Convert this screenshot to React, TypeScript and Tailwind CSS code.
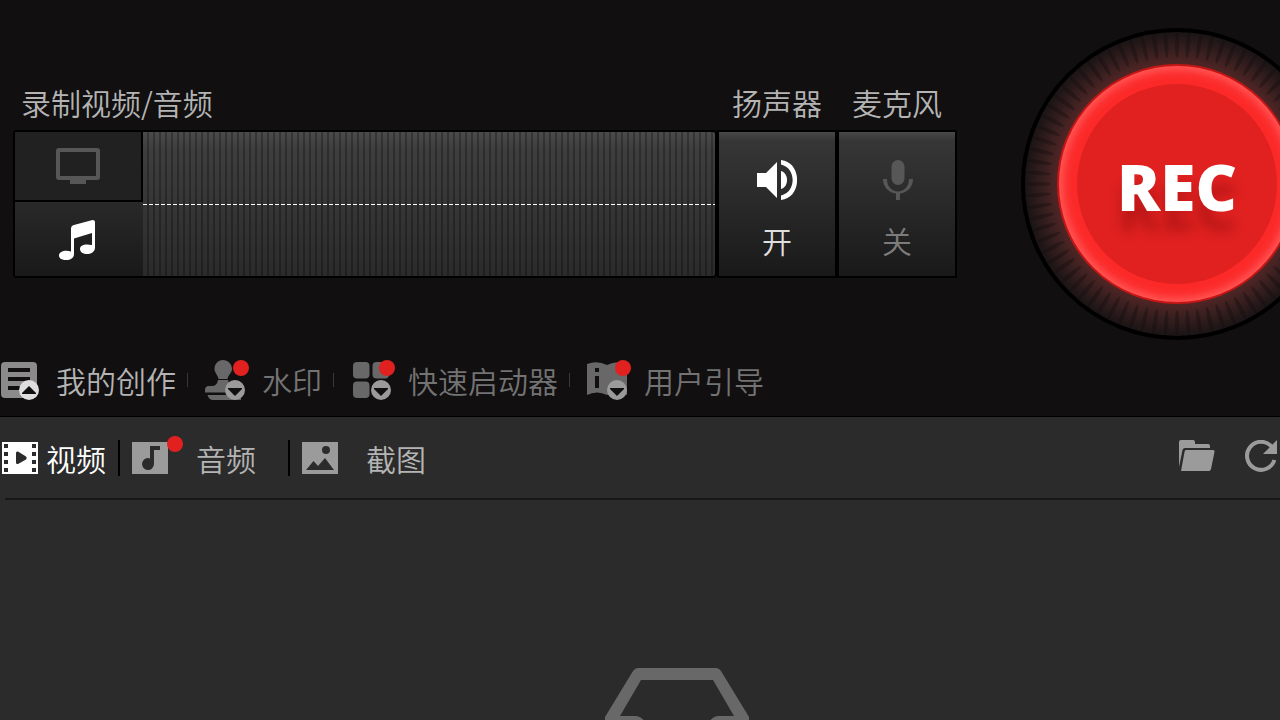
import type { ReactNode } from "react";

const ticks = Array.from({ length: 80 }, (_, i) => i * 4.5);

function MonitorIcon() {
  return (
    <svg className="h-10 w-11" viewBox="0 0 44 40" fill="#575757" aria-hidden="true">
      <path fillRule="evenodd" d="M3 2h38q3 0 3 3v26q0 3-3 3h-11v4H14v-4H3q-3 0-3-3V5q0-3 3-3zM4 6v24h36V6z" />
    </svg>
  );
}

function MusicIcon() {
  return (
    <svg className="h-10 w-9" viewBox="0 0 36 40" fill="#fff" aria-hidden="true">
      <path d="M12 8.500Q12 6 14 5.300L33.500 0.100Q36 0 36 2V27.500C36 31.500 32.500 34 28.500 34C24 34 21 32 21 29C21 25 26 23.500 33 25V13L15 18.500V34C15 38 11.500 40 7 40C3 40 0 38.500 0 35.500C0 31.500 6 29.800 12 31.500z" />
    </svg>
  );
}

function SpeakerIcon() {
  return (
    <svg className="size-10" viewBox="0 0 40 40" fill="#fff" aria-hidden="true">
      <path d="M0 13h9L20 2v36L9 27H0z" />
      <path d="M24 11c8 2 8 16 0 18z" />
      <path d="M24 0C45.500 2 45.500 38 24 40v-4.500C39.500 32 39.500 8 24 4.500z" />
    </svg>
  );
}

function MicIcon() {
  return (
    <svg className="size-10" viewBox="0 0 40 40" fill="#575757" aria-hidden="true">
      <rect x="14.500" y="0" width="13" height="25" rx="6.500" />
      <path d="M6 19h4c0 16.500 22 16.500 22 0h4c0 8-5.500 13.500-13 14.500V40h-4v-6.500C11.500 32.500 6 27 6 19z" />
    </svg>
  );
}

function Badge({ up }: { up?: boolean }) {
  return up ? (
    <g>
      <circle cx="30" cy="30" r="10" fill="#dedede" />
      <path d="M30 26l7 7v1H23v-1z" fill="#110f10" />
    </g>
  ) : (
    <g>
      <circle cx="30" cy="30" r="10" fill="#9b9b9b" />
      <path d="M23 28h14v1l-7 7-7-7z" fill="#110f10" />
    </g>
  );
}

function ListIcon() {
  return (
    <svg className="size-10" viewBox="0 0 40 40" aria-hidden="true">
      <rect x="2" y="2" width="36" height="36" rx="4" fill="#8b8b8b" />
      <path d="M9 8h22v4H9zM9 17h22v4H9zM9 26h22v4H9z" fill="#110f10" />
      <Badge up />
    </svg>
  );
}

function StampIcon() {
  return (
    <svg className="size-10" viewBox="0 0 40 40" aria-hidden="true">
      <path d="M18 0c5 0 9 4 9 9 0 4-3.500 5-4.500 10h-9C12.500 14 9.500 13 9.500 9c0-5 3.500-9 8.500-9zM13 20h10q1 6 8 6h5v6.500H0V30q0-4 4-4h3q5 0 6-6zM2.500 35H36v5H8q-4 0-5.500-5z" fill="#686868" />
      <Badge />
    </svg>
  );
}

function GridIcon() {
  return (
    <svg className="size-10" viewBox="0 0 40 40" aria-hidden="true">
      <g fill="#686868">
        <rect x="2" y="2" width="16.500" height="16.500" rx="4" />
        <rect x="21.500" y="2" width="16.500" height="16.500" rx="4" />
        <rect x="2" y="21.500" width="16.500" height="16.500" rx="4" />
      </g>
      <Badge />
    </svg>
  );
}

function GuideIcon() {
  return (
    <svg className="size-10" viewBox="0 0 40 40" aria-hidden="true">
      <path d="M0 4q10-4 20 1 10-5 20-1v31q-10-4-20 0-10-5-20 0z" fill="#686868" />
      <path d="M8 8h4v4H8zM8 16h4v12H8z" fill="#110f10" />
      <Badge />
    </svg>
  );
}

function FilmIcon() {
  return (
    <svg className="h-8 w-9" viewBox="0 0 36 32" aria-hidden="true">
      <path d="M0 0h36v32H0z" fill="#fff" />
      <path d="M2 2h4v4H2zM2 10h4v4H2zM2 18h4v4H2zM2 26h4v4H2zM30 2h4v4h-4zM30 10h4v4h-4zM30 18h4v4h-4zM30 26h4v4h-4zM14 11q0-2 2-1.500l8 5q1.500 1.500 0 3l-8 4.500q-2 .5-2-1.500z" fill="#2b2b2b" />
    </svg>
  );
}

function AudioIcon() {
  return (
    <svg className="h-8 w-9" viewBox="0 0 36 32" aria-hidden="true">
      <path d="M0 0h36v32H0z" fill="#9b9b9b" />
      <path d="M18 4h10v4h-6v14a6 6 0 1 1-4-5.600z" fill="#2b2b2b" />
    </svg>
  );
}

function PictureIcon() {
  return (
    <svg className="h-8 w-9" viewBox="0 0 36 32" aria-hidden="true">
      <path d="M0 0h36v32H0z" fill="#9b9b9b" />
      <circle cx="24" cy="8" r="4" fill="#2b2b2b" />
      <path d="M4 28l7.500-9 4.500 5 7-8 9 12z" fill="#2b2b2b" />
    </svg>
  );
}

function FolderIcon() {
  return (
    <svg className="h-8 w-9" viewBox="0 0 36 32" fill="#9b9b9b" aria-hidden="true">
      <path d="M0 2q0-2 2-2h12q2 0 2 2v2h13q2 0 2 2v2H6q-2 0-2.500 2L0 27z" />
      <path d="M7 10h27q2 0 1.500 2L32 29q-.5 2-2 2H2l3.500-19q.3-2 1.500-2z" />
    </svg>
  );
}

function RefreshIcon() {
  return (
    <svg className="size-8" viewBox="0 0 32 32" aria-hidden="true">
      <path d="M26.500 6.500A14 14 0 1 0 29.400 20" fill="none" stroke="#9b9b9b" strokeWidth="4" />
      <path d="M32 0v14H18z" fill="#9b9b9b" />
    </svg>
  );
}

function Dot({ place }: { place: string }) {
  return <span className={`absolute size-4 rounded-full bg-[#e02120] ${place}`} />;
}

function Divider() {
  return <span className="mr-[17px] ml-[11px] h-3.5 w-px bg-[#393939]" />;
}

function Tab({ icon, label, dot, active }: { icon: ReactNode; label: string; dot?: string; active?: boolean }) {
  return (
    <button
      type="button"
      className={`flex items-center gap-[17px] whitespace-nowrap ${active ? "text-[#b4b4b4]" : "text-[#737373]"}`}
    >
      <span className="relative">
        {icon}
        {dot && <Dot place={dot} />}
      </span>
      <span className="leading-10">{label}</span>
    </button>
  );
}

function Device({ title, state, on, icon }: { title: string; state: string; on?: boolean; icon: ReactNode }) {
  return (
    <section className="w-[120px] shrink-0">
      <h2 className="mb-2 text-center leading-10 whitespace-nowrap text-[#b4b4b4]">{title}</h2>
      <button
        type="button"
        aria-label={title + state}
        className={`flex h-[148px] w-full flex-col items-center gap-5 border-2 border-black bg-[linear-gradient(#484848_0,#363636_9px,#343434_20px,#191919_100%)] pt-7 ${on ? "text-[#dedede]" : "text-[#7c7c7c]"}`}
      >
        {icon}
        <span className="leading-10">{state}</span>
      </button>
    </section>
  );
}

function RecordDial() {
  return (
    <button type="button" aria-label="REC" className="relative -mr-[53px] size-[312px] shrink-0">
      <svg className="size-full" viewBox="-156 -156 312 312" aria-hidden="true">
        <defs>
          <radialGradient id="halo" gradientUnits="userSpaceOnUse" cx="0" cy="0" r="154">
            <stop offset="0.76" stopColor="#552626" />
            <stop offset="0.86" stopColor="#3b2020" />
            <stop offset="1" stopColor="#171314" />
          </radialGradient>
          <radialGradient id="rim" gradientUnits="userSpaceOnUse" cx="0" cy="0" r="118">
            <stop offset="0.88" stopColor="#fb2928" />
            <stop offset="0.93" stopColor="#fc3030" />
            <stop offset="1" stopColor="#ff5251" />
          </radialGradient>
        </defs>
        <circle r="154" fill="url(#halo)" stroke="#000" strokeWidth="4" />
        {ticks.map((a) => (
          <ellipse key={a} cx="0" cy="-139" rx="2" ry="12.500" fill="#120c0d" opacity="0.35" transform={`rotate(${a})`} />
        ))}
        <circle r="119" fill="url(#rim)" stroke="#c51615" strokeWidth="2" />
        <circle r="100" fill="#e02120" />
      </svg>
      <span className="absolute inset-0 flex items-center justify-center pt-1.5 font-['Open_Sans',sans-serif] text-[64px] leading-none font-extrabold text-white [text-shadow:0_20px_12px_rgba(100,0,0,0.3)]">
        REC
      </span>
    </button>
  );
}

export default function App() {
  return (
    <div className="flex h-screen flex-col overflow-hidden bg-[#2b2b2b] font-['Noto_Sans_CJK_SC',sans-serif] text-[30px] font-[350]">
      <header className="border-b border-black bg-[#110f10]">
        <div className="flex pt-7 pl-[13px]">
          <div className="mr-16 flex min-w-0 flex-1 pt-[54px]">
            <section className="min-w-0 flex-1">
              <h2 className="mb-2 pl-2 leading-10 whitespace-nowrap text-[#b4b4b4]">录制视频/音频</h2>
              <div className="flex h-[148px] rounded-sm border-2 border-black bg-black">
                <div className="flex w-32 shrink-0 flex-col">
                  <button type="button" aria-label="视频" className="flex h-[70px] items-center justify-center border-r-2 border-b-2 border-black bg-[#212121]">
                    <MonitorIcon />
                  </button>
                  <button type="button" aria-label="音频" className="flex flex-1 items-center justify-center bg-[linear-gradient(#292929,#191919)] pt-0.5 pr-1">
                    <MusicIcon />
                  </button>
                </div>
                <div className="flex flex-1 flex-col justify-center overflow-hidden rounded-r-xs bg-[repeating-linear-gradient(90deg,transparent_0_4px,rgba(0,0,0,0.27)_4px_6px),linear-gradient(#4b4b4b,#3e3e3e_12%,#2b2b2b)]">
                  <div className="h-px bg-[repeating-linear-gradient(90deg,#fff_0_4px,transparent_4px_6px)]" />
                </div>
              </div>
            </section>
            <Device title="扬声器" state="开" on icon={<SpeakerIcon />} />
            <Device title="麦克风" state="关" icon={<MicIcon />} />
          </div>
          <RecordDial />
        </div>
        <nav className="-ml-px flex items-center pt-5 pb-4">
          <Tab icon={<ListIcon />} label="我的创作" active />
          <Divider />
          <Tab icon={<StampIcon />} label="水印" dot="top-0 left-7" />
          <Divider />
          <Tab icon={<GridIcon />} label="快速启动器" dot="top-0 left-7" />
          <Divider />
          <Tab icon={<GuideIcon />} label="用户引导" dot="top-0 left-7" />
        </nav>
      </header>
      <main>
        <div className="flex h-[81px] items-center justify-between pr-[3px] pl-0.5">
          <div className="flex items-center whitespace-nowrap">
            <button type="button" className="flex items-center gap-2 text-white">
              <FilmIcon />
              <span className="leading-10">视频</span>
            </button>
            <span className="mr-3 ml-3 h-9 w-0.5 bg-black" />
            <button type="button" className="flex items-center gap-7 text-[#b4b4b4]">
              <span className="relative">
                <AudioIcon />
                <Dot place="-top-1.5 left-[35px]" />
              </span>
              <span className="leading-10">音频</span>
            </button>
            <span className="mr-3 ml-8 h-9 w-0.5 bg-black" />
            <button type="button" className="flex items-center gap-7 text-[#b4b4b4]">
              <PictureIcon />
              <span className="leading-10">截图</span>
            </button>
          </div>
          <div className="flex items-center gap-[30px] pb-1">
            <button type="button" aria-label="打开文件夹">
              <FolderIcon />
            </button>
            <button type="button" aria-label="刷新">
              <RefreshIcon />
            </button>
          </div>
        </div>
        <div className="ml-[5px] h-0.5 bg-[#171717]" />
        <div className="-mr-[74px] flex justify-center pt-[168px]">
          <svg className="h-[110px] w-36" viewBox="0 0 144 110" fill="#686868" aria-hidden="true">
            <path
              fillRule="evenodd"
              d="M33 0h78q3 0 5 3l28 46v55q0 6-6 6H6q-6 0-6-6V49L28 3q2-3 5-3zM36 12L15 48h15q6 0 10 6 6 16 32 16t32-16q4-6 10-6h15L108 12z"
            />
          </svg>
        </div>
      </main>
    </div>
  );
}
